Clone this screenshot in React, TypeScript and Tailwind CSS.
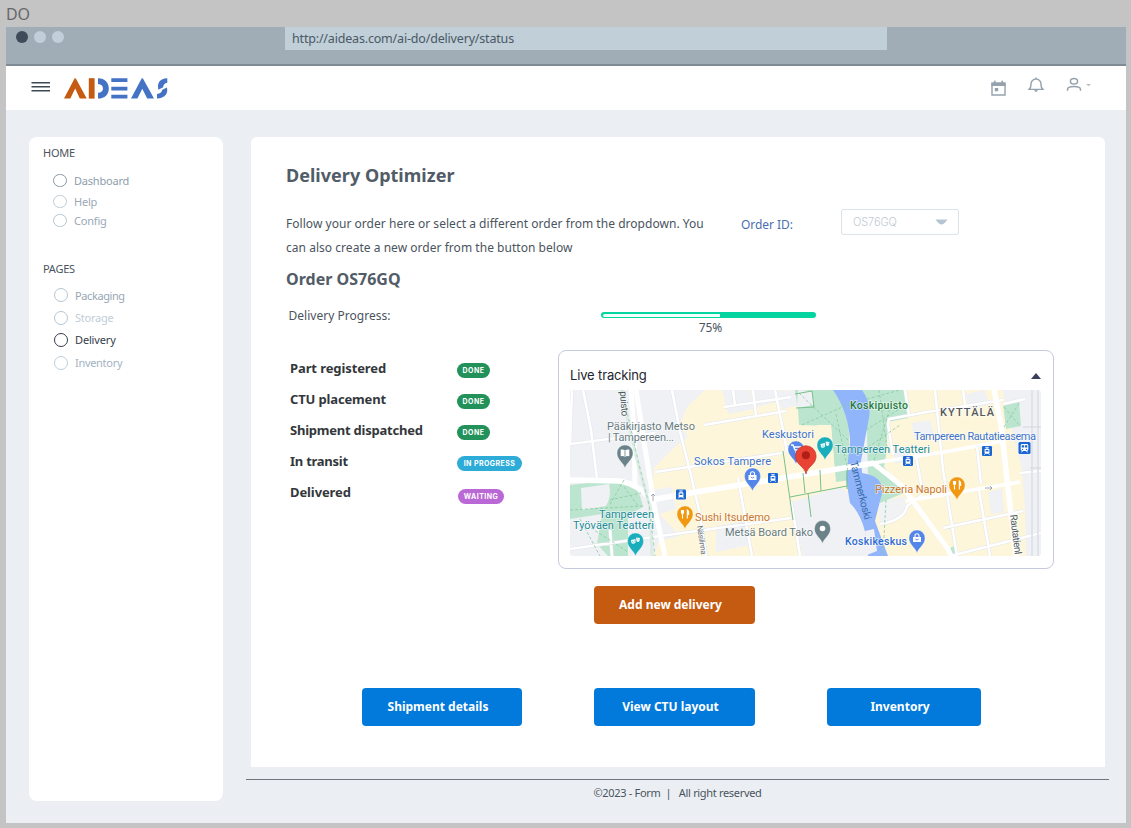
import React from "react";

type Item = { label: string; row: string; text: string; ring: string };

const home: Item[] = [
  { label: "Dashboard", row: "h-[21px] ml-[24px]", text: "text-[#8e9dab] tracking-[-0.2px]", ring: "border-[#8c97a1] w-[14px] h-[13px] mr-[7px]" },
  { label: "Help", row: "h-[20px] ml-[24px]", text: "text-[#9aa8b6] tracking-[-0.2px] pt-[2px]", ring: "border-[#c0ccd6] w-[14px] h-[13px] mr-[7px]" },
  { label: "Config", row: "h-[18px] ml-[24px]", text: "text-[#9aa8b6] tracking-[-0.2px] pt-[2px]", ring: "border-[#b9c6d0] w-[14px] h-[13px] mr-[7px]" },
];

const pages: Item[] = [
  { label: "Packaging", row: "h-[22px] ml-[25px]", text: "text-[#98a6b4] tracking-[-0.4px] pt-px", ring: "border-[#b5c5d0] w-[14px] h-[14px] mr-[7px]" },
  { label: "Storage", row: "h-[23px] ml-[25px]", text: "text-[#bfcdd8] tracking-[-0.25px]", ring: "border-[#b5c5d0] w-[14px] h-[14px] mr-[7px]" },
  { label: "Delivery", row: "h-[22px] ml-[25px]", text: "text-[#343c48] tracking-[-0.15px]", ring: "border-[#343c48] w-[14px] h-[14px] mr-[7px]" },
  { label: "Inventory", row: "h-[23px] ml-[25px]", text: "text-[#a4b3bf] tracking-[-0.3px]", ring: "border-[#c0ced8] w-[14px] h-[14px] mr-[7px]" },
];

function NavItem({ label, row, text, ring }: Item) {
  return (
    <li className={`flex items-center ${row}`}>
      <span className={`shrink-0 rounded-full border ${ring}`} />
      <span className={`text-[11px] leading-[14px] ${text}`}>{label}</span>
    </li>
  );
}

function Logo() {
  return (
    <svg className="ml-[13px] mt-[11px] h-[23px] w-[106px]" viewBox="63 77 106 23">
      <g fill="#c55a11">
        <path d="M64 98.5 74 79.5Q75.2 77.2 76.4 79.5L86.7 98.5H79.8L75.2 88.5 70.3 98.5Z" />
        <path d="M88.8 78.2H94.6V98.6H88.8Z" />
      </g>
      <g fill="#4472c4">
        <path d="M98 78.2C105 78.4 108.8 82.5 108.8 88.4S105 98.4 98 98.6V92.8C101.2 92.5 103 91 103 88.4S101.2 84.2 98 84Z" />
        <path d="M111.3 78.3H127.4V82H111.3ZM111.3 86.7H127.4V90.4H111.3ZM111.3 94.8H127.4V98.5H111.3Z" />
        <path d="M131 98.5 141.1 79.5Q142.3 77.2 143.5 79.5L154 98.5H147.2L142.3 88.8 137.4 98.5Z" />
        <path d="M167.3 78.2V82.7Q163.3 83.2 163.2 87.3L158.4 89.8Q156 79 167.3 78.2ZM162.3 89.8 167 87.6Q168.8 97.8 157 98.6V94Q161.5 93.8 162.3 89.8Z" />
      </g>
    </svg>
  );
}

function Pin({ x, y, color, children }: { x: number; y: number; color: string; children?: React.ReactNode }) {
  return (
    <g transform={`translate(${x} ${y})`}>
      <path d="M0 15C-1.6 9.5-8 7-8 0A8 8 0 0 1 8 0C8 7 1.6 9.5 0 15Z" fill={color} stroke="#fff" strokeOpacity=".55" strokeWidth=".6" />
      {children}
    </g>
  );
}

const bag = (
  <g fill="none" stroke="#fff">
    <path d="M-4-1H4V4H-4Z" fill="#fff" stroke="none" />
    <path d="M-2-1V-2.2A2 2 0 0 1 2-2.2V-1" strokeWidth="1.1" />
    <path d="M-1.7 1Q0 3 1.7 1" stroke="#5485e8" strokeWidth=".9" />
  </g>
);
const cutlery = (
  <g stroke="#fff" fill="none" strokeWidth="1.1">
    <path d="M-3.5-4V-1Q-2.5 .5-1.5-1V-4M-2.5-4V4.5" />
    <path d="M2.3 4.5V-4Q4-3 3.6 .5H2.3" fill="#fff" />
  </g>
);
const masks = (
  <g fill="#fff">
    <path d="M-4.5-1 0-2V1.5Q-2 4-4 2ZM.6-3.6 4.5-3 4 0Q2.5 2 1 0Z" />
    <path d="M-3.3 .4H-2.3M-1.5 0H-.7M-3 2 -1.3 1.7M1.7-2H2.4M3.1-1.8H3.7" stroke="#18aebb" strokeWidth=".6" />
  </g>
);

function Tram({ x, y, size = 10 }: { x: number; y: number; size?: number }) {
  return (
    <g transform={`translate(${x} ${y}) scale(${size / 10})`}>
      <rect x="-5" y="-5" width="10" height="10" rx="1.3" fill="#1b66d2" />
      <path d="M-1.8-3.6H1.8M0-3.6V-2" stroke="#fff" strokeWidth=".8" />
      <rect x="-2.4" y="-2.2" width="4.8" height="5" rx=".8" fill="#fff" />
      <path d="M-1.4-1.1H1.4V.5H-1.4Z" fill="#1b66d2" />
      <path d="M-1.7 2.5-2.6 3.8M1.7 2.5 2.6 3.8" stroke="#fff" strokeWidth=".8" />
    </g>
  );
}

function Train({ x, y }: { x: number; y: number }) {
  return (
    <g transform={`translate(${x} ${y})`}>
      <rect x="-6" y="-6" width="12" height="12" rx="1.5" fill="#1b66d2" />
      <rect x="-3.8" y="-4" width="7.6" height="7" rx="1.4" fill="#fff" />
      <path d="M-2.8-2.8H-.4V-.4H-2.8ZM.4-2.8H2.8V-.4H.4Z" fill="#1b66d2" />
      <circle cx="-2" cy="1.4" r=".7" fill="#1b66d2" />
      <circle cx="2" cy="1.4" r=".7" fill="#1b66d2" />
      <path d="M-2 3-3 4.4M2 3 3 4.4" stroke="#fff" strokeWidth=".9" />
    </g>
  );
}

type LabelProps = { x: number; y: number; w: number; fill: string; children: string; size?: number; weight?: number; rotate?: number };

function Label({ x, y, w, fill, children, size = 11, weight = 400, rotate = 0 }: LabelProps) {
  return (
    <text
      x={x} y={y} textLength={w} fill={fill} fontSize={size} fontWeight={weight}
      stroke="#fff" strokeOpacity=".6" strokeWidth="1.6" strokeLinejoin="round" paintOrder="stroke"
      transform={rotate ? `rotate(${rotate} ${x} ${y})` : undefined}
    >
      {children}
    </text>
  );
}

const sideStreets =
  "M570 444 655 433M704 425 786 411M583 390 591 430 597 479M655 472 782 453M570 549 653 537 791 518M753 390 756 416M672 390 680 432 691 475 699 510 706 556M733 390 735 405M738 478 752 556M775 390 783 430 787 452M791 502 796 530 800 556M724 407 791 397M888 424 889 419 927 412 1003 400M905 390 909 415M935 390 943 470 957 556M963 390 966 412M888 424 893 455M977 446 981 484M915 450 922 489M943 528 1023 511M979 490 990 556M950 556 1041 533M1020 473 1041 471M1003 404 1025 399M880 524Q905 520 907 506L922 495M610 530 612 556M570 444 572 390";

function TrackingMap() {
  return (
    <svg className="block h-[166px] w-[471px] rounded-[3px] font-['Roboto',sans-serif]" viewBox="570 390 471 166">
      <path d="M570 390H1041V556H570Z" fill="#eff1f4" />
      <g fill="#fef6db">
        <path d="M705 390H753L757 407 776 402 781 390H855V556H654L659 541 680 536 651 505 654 468 675 447 688 437 680 424 687 407Z" />
        <path d="M870 390H1002L1022 470 1025 510 1026 556H870Z" />
      </g>
      <g fill="#eff1f4">
        <path d="M722 390H750L754 409 728 414ZM776 391 798 390 799 405 782 409ZM652 490 672 487 676 509 656 515ZM716 526 745 521 750 545 716 552ZM791 502 841 487 870 510 878 556H803ZM912 423 930 420 934 434 914 438ZM966 394 984 390 990 404 969 410ZM893 450 909 446 910 460 895 464ZM988 492 1002 488 1004 512 991 514Z" />
      </g>
      <path d="M878 502 905 496 905 515 880 525Z" fill="#f1f2f4" />

      <g fill="#bce5cf">
        <path d="M570 485 624 479Q638 482 643 507L628 515 628 556H608L597 544 602 514 570 519Z" />
        <path d="M795 390H848L849 435 850 480 836 482 834 460 831 426 799 425 798 410Z" />
        <path d="M862 390H906L908 418 888 422 886 455 884 467 904 493 880 503 868 480 867 430Z" />
        <path d="M1003 404 1019 401 1021 426 1006 429ZM948 549 956 545 958 556H948Z" />
      </g>
      <path d="M581 488 609 484Q612 496 606 506L582 510Z" fill="#eff1f4" />
      <path d="M817 425H831L834 460 820 460Z" fill="#fef6db" />
      <path d="M798 390 812 391 814 405 797 408Z" fill="#eff1f4" />
      <path d="M833 390H862Q873 405 868 423L861 461 862 473Q889 477 880 501L875 521 888 556H868Q867 520 850 503L846 479 850 442Q849 413 833 390Z" fill="#91b5fa" />
      <path d="M865 531 874 529 877 551 867 555Z" fill="#eff1f4" />

      <path d={sideStreets} fill="none" stroke="#e2e5ea" strokeWidth="3.6" />
      <path d={sideStreets} fill="none" stroke="#fff" strokeWidth="2.6" />
      <g fill="none" stroke="#fff" strokeLinejoin="round">
        <path d="M570 480 620 481Q638 484 651 500L690 493 777 479 874 463" strokeWidth="5.5" />
        <path d="M636 390 645 448 655 510 665 556M631 390 634 430 635 486" strokeWidth="5" />
        <path d="M873 463 902 486 948 549 951 556" strokeWidth="5" />
        <path d="M994 390 1001 425 1007 480 1016 556" strokeWidth="5.5" />
        <path d="M906 501 1020 482" strokeWidth="3.8" />
        <path d="M873 463 950 451 1003 441" strokeWidth="3.6" />
      </g>
      <path d="M621 390 637 460 650 507 652 556" fill="none" stroke="#dbece4" strokeWidth="3" />
      <path d="M622 390 638 460 649 505 655 556" fill="none" stroke="#8bcda7" strokeWidth=".8" strokeDasharray="3 3" />
      <g fill="none" stroke="#86ca9e" strokeWidth=".8" strokeDasharray="3 2">
        <path d="M570 510 643 506M580 519 600 556M624 480 609 506M624 487 639 507M610 500 641 493M591 528 628 552M799 393 848 440M802 425 849 404M836 414 848 471M867 399 900 390M866 430 904 406M879 390 887 447M864 450 900 425M874 460 890 408M886 500 883 556M1004 427 1020 402M1004 407 1020 426" />
      </g>
      <path d="M783 451 793 520M790 497 847 486M803 473 805 493M820 470 821 491M808 493 811 517M795 394 812 391 814 407 796 408M847 470V489" fill="none" stroke="#78bf8a" strokeWidth="1" />
      <path d="M1032 390V556M1038 390V556" stroke="#e0e3ea" strokeWidth="2" />
      <path d="M1023 427H1041M1030 468H1041" stroke="#d1d5dc" />
      <path d="M985 488H992M990 486 992 488 990 490M653 494V501M651 496 653 494 655 496" stroke="#8d969f" strokeWidth=".8" fill="none" />

      <Label x={620} y={391.5} w={25} size={10} fill="#4f5a60" rotate={86}>puisto</Label>
      <Label x={607} y={430} w={88} fill="#687b81">Pääkirjasto Metso</Label>
      <Label x={608} y={441} w={66} fill="#687b81">| Tampereen...</Label>
      <Label x={694} y={465} w={77} fill="#3d73c9">Sokos Tampere</Label>
      <Label x={762} y={438} w={52} fill="#3d73c9">Keskustori</Label>
      <Label x={850} y={409} w={58} size={10.5} fill="#237b3b" weight={500}>Koskipuisto</Label>
      <Label x={940} y={415.5} w={54} size={11} fill="#53595e" weight={500}>KYTTÄLÄ</Label>
      <Label x={914} y={440} w={122} fill="#3d73c9">Tampereen Rautatieasema</Label>
      <Label x={835} y={453} w={95} fill="#248b98">Tampereen Teatteri</Label>
      <Label x={875} y={493} w={72} fill="#ca762b">Pizzeria Napoli</Label>
      <Label x={599} y={518} w={55} fill="#248b98">Tampereen</Label>
      <Label x={573} y={529} w={81} fill="#248b98">Työväen Teatteri</Label>
      <Label x={695} y={521} w={75} fill="#ca762b">Sushi Itsudemo</Label>
      <Label x={725} y={536} w={88} fill="#687b81">Metsä Board Tako</Label>
      <Label x={845} y={545} w={62} size={10.5} fill="#2e6bd4" weight={500}>Koskikeskus</Label>
      <Label x={697} y={526} w={29} size={8} fill="#697477" rotate={82}>Näsilinna</Label>
      <Label x={1010} y={515} w={40} size={10} fill="#4f5a60" rotate={83}>Rautatienl</Label>
      <text fontSize="10.5" fill="#386baa" x="850" y="462" textLength="60" transform="rotate(76 850 462)">Tammerkoski</text>

      <Pin x={625} y={453} color="#6c8289">
        <path d="M-4.3-3.4Q-2-3.8 0-2.6 2-3.8 4.3-3.4V3.2Q2 2.6 0 3.8-2 2.6-4.3 3.2Z" fill="#fff" />
        <path d="M0-2.2V3.5" stroke="#6c8289" strokeWidth=".8" />
      </Pin>
      <Pin x={752.5} y={476} color="#5485e8">{bag}</Pin>
      <Pin x={917} y={538} color="#5485e8">{bag}</Pin>
      <Pin x={685} y={514} color="#f09812">{cutlery}</Pin>
      <Pin x={957} y={485} color="#f09812">{cutlery}</Pin>
      <Pin x={635.5} y={541} color="#18aebb">{masks}</Pin>
      <Pin x={825} y={445} color="#18aebb">{masks}</Pin>
      <Pin x={822.5} y={528.5} color="#6c8289"><circle r="2.8" fill="#fff" /></Pin>
      <Pin x={796} y={449} color="#5485e8">
        <path d="M-5-4H-3L-1 1H4L5-2H-2M-1 3.2H0M3 3.2H4" stroke="#fff" strokeWidth="1.3" fill="none" />
      </Pin>
      <path d="M806 474C804.7 466 795.5 465 795.5 456A10.3 10.3 0 0 1 816.1 456C816.1 465 807.3 466 806 474Z" fill="#e94335" stroke="#c5352b" strokeWidth=".7" />
      <circle cx="805.9" cy="455.3" r="4" fill="#b11e16" />

      <Tram x={681} y={494.5} />
      <Tram x={773} y={478} />
      <Tram x={908} y={461} />
      <Tram x={987} y={451} />
      <Train x={1024.5} y={448} />
    </svg>
  );
}

const steps = [
  { label: "Part registered", track: "tracking-[-0.1px]", badge: "DONE", style: "bg-[#23925a] w-[33px]" },
  { label: "CTU placement", track: "tracking-[-0.15px]", badge: "DONE", style: "bg-[#23925a] w-[33px]" },
  { label: "Shipment dispatched", track: "tracking-[-0.23px]", badge: "DONE", style: "bg-[#23925a] w-[33px]" },
  { label: "In transit", track: "tracking-[-0.25px]", badge: "IN PROGRESS", style: "bg-[#2dacd8] w-[65px]" },
  { label: "Delivered", track: "tracking-[-0.1px]", badge: "WAITING", style: "bg-[#ba68d6] w-[46px] mt-[13px] ml-[1px]" },
];

function Action({ children, className }: { children: string; className: string }) {
  return (
    <button className={`flex h-[38px] items-center justify-center rounded-[4px] pb-px text-[12px] font-bold text-white ${className}`}>
      {children}
    </button>
  );
}

export default function App() {
  return (
    <div className="flex h-[828px] w-[1131px] flex-col overflow-hidden bg-[#c4c4c4] pr-[5px] pl-[6px] font-['Noto_Sans',sans-serif] text-[#4a545e]">
      <div className="h-[27px] shrink-0 pt-[3px] text-[16px] leading-[22px] tracking-[-0.3px] text-[#686868]">DO</div>

      <div className="flex h-[39px] shrink-0 items-start border-b-2 border-[#7f8b95] bg-[#a0adb7]">
        <div className="flex w-[279px] gap-[6px] pt-[4px] pl-[9.5px]">
          <span className="size-[12px] rounded-full bg-[#404b59]" />
          <span className="size-[12px] rounded-full bg-[#c0cfd9]" />
          <span className="size-[12px] rounded-full bg-[#c0cfd9]" />
        </div>
        <div className="h-[23px] w-[602px] bg-[#c0cfd8] pl-[7px] text-[12.5px] leading-[24px] tracking-[-0.18px] text-[#4b5865]">
          http://aideas.com/ai-do/delivery/status
        </div>
      </div>

      <header className="flex h-[44px] shrink-0 items-start bg-white">
        <svg className="mt-[15px] ml-[25px] h-[12px] w-[19px]" viewBox="0 0 19 12">
          <path d="M.5 1.7H19M.5 5.7H19M.5 9.7H19" stroke="#3e4957" strokeWidth="1.4" />
        </svg>
        <Logo />
        <div className="mr-[34px] ml-auto flex items-start text-[#95a2ad]">
          <svg className="mt-[14px] mr-[22px] h-[17px] w-[15px]" viewBox="0 0 15 17">
            <path d="M1 3.2H14V15H1Z" fill="none" stroke="currentColor" strokeWidth="1.4" />
            <path d="M.5 2.5H14.5V6H.5ZM3 .8H4.7V3H3ZM10.3 .8H12V3H10.3ZM3.8 8H7.2V11.3H3.8Z" fill="currentColor" />
          </svg>
          <svg className="mt-[11px] mr-[22px] h-[16px] w-[16px]" viewBox="0 0 16 16" fill="none" stroke="currentColor" strokeWidth="1.4">
            <path d="M1 12.4H15Q13 11 13 7A5 5 0 0 0 3 7Q3 11 1 12.4ZM8 .5V2M6.7 13.2Q8 15.4 9.3 13.2" />
          </svg>
          <svg className="mt-[11px] h-[15px] w-[26px]" viewBox="0 0 26 15" fill="none" stroke="currentColor" strokeWidth="1.5">
            <ellipse cx="8" cy="4.2" rx="3.6" ry="2.8" />
            <path d="M1.5 13.8V12.5C1.5 8.5 14.5 8.5 14.5 12.5V13.8" />
            <path d="M20 7H25L22.5 9.2Z" fill="#b5bfc7" stroke="none" />
          </svg>
        </div>
      </header>

      <div className="flex h-[713px] shrink-0 bg-[#ebeff3] pt-[27px] pl-[23px]">
        <aside className="h-[664px] w-[194px] shrink-0 rounded-[8px] bg-white pt-[8px]">
          <h2 className="ml-[14px] text-[11px] leading-[16px] tracking-[-0.2px]">HOME</h2>
          <ul className="mt-[9px] h-[91px]">{home.map((i) => <NavItem key={i.label} {...i} />)}</ul>
          <h2 className="ml-[14px] text-[11px] leading-[16px] tracking-[-0.25px]">PAGES</h2>
          <ul className="mt-[7px]">{pages.map((i) => <NavItem key={i.label} {...i} />)}</ul>
        </aside>

        <div className="ml-[23px] flex w-[863px] flex-col">
          <main className="ml-[5px] h-[630px] w-[854px] rounded-t-[6px] bg-white pt-[26px] pl-[35px]">
            <h1 className="h-[49px] text-[18px] leading-[25px] font-bold tracking-[0.02px] text-[#525c66]">Delivery Optimizer</h1>
            <section className="flex h-[53px] items-start">
              <p className="w-[455px] text-[12px] leading-[24px] tracking-[0.035px] whitespace-nowrap">
                Follow your order here or select a different order from the dropdown. You
                <br />
                can also create a new order from the button below
              </p>
              <span className="mt-[4px] w-[100px] text-[12px] leading-[18px] tracking-[-0.05px] text-[#4c6fb0]">Order ID:</span>
              <div className="-mt-[3px] flex h-[26px] w-[118px] items-center rounded-[2px] border border-[#dce3e9] pr-[10px] pl-[11px] font-['Inter',sans-serif] text-[11px] font-light tracking-[-0.1px] text-[#c3cad1]">
                OS76GQ
                <svg className="mb-px ml-auto h-[6px] w-[13px]" viewBox="0 0 13 6"><path d="M.5 .5H12.5Q9 5.5 6.5 5.5T.5 .5Z" fill="#b5c4d0" /></svg>
              </div>
            </section>
            <h2 className="h-[42px] text-[16px] leading-[28px] font-bold tracking-[0.01px] text-[#525c66]">Order OS76GQ</h2>
            <section className="flex h-[43px] items-start pl-[2.5px]">
              <span className="w-[312.5px] text-[12px] leading-[18px] tracking-[0.02px]">Delivery Progress:</span>
              <div className="flex w-[215px] flex-col pt-[5px]">
                <div className="h-[6px] rounded-full bg-[#04d4a0] p-[1.5px]">
                  <div className="h-[3px] w-[117px] rounded-l-full bg-[#effffb]" />
                </div>
                <span className="pl-[4px] text-center text-[12px] leading-[20px]">75%</span>
              </div>
            </section>
            <section className="flex h-[219px]">
              <ul className="w-[272px] pt-[2px] pl-[4px] text-[#33373b]">
                {steps.map((s) => (
                  <li key={s.label} className="flex h-[31px] items-start">
                    <span className={`mt-[6px] w-[167px] text-[13px] leading-[20px] font-bold ${s.track}`}>{s.label}</span>
                    <span className={`mt-[11px] flex h-[15px] items-center justify-center rounded-full pt-px font-['Inter',sans-serif] text-[7px] font-bold tracking-[0.45px] text-white ${s.style}`}>
                      {s.badge}
                    </span>
                  </li>
                ))}
              </ul>
              <div className="w-[496px] rounded-[8px] border border-[#c5cadd] pl-[11px]">
                <div className="flex h-[39px] items-center pt-[11px] pr-[12px] font-['Inter',sans-serif] text-[13px] tracking-[-0.15px] text-[#22252e]">
                  Live tracking
                  <svg className="ml-auto h-[6px] w-[10px]" viewBox="0 0 10 6"><path d="M0 6 5 0 10 6Z" fill="#39405c" /></svg>
                </div>
                <TrackingMap />
              </div>
            </section>
            <div className="mt-[17px] pl-[308px]">
              <Action className="w-[161px] bg-[#c55a11] pr-[8px]">Add new delivery</Action>
            </div>
            <div className="mt-[64px] flex pl-[76px]">
              <Action className="w-[160px] bg-[#027adb] pr-[8px]">Shipment details</Action>
              <Action className="ml-[72px] w-[161px] bg-[#027adb] pr-[8px]">View CTU layout</Action>
              <Action className="ml-[72px] w-[154px] bg-[#027adb] pr-[8px]">Inventory</Action>
            </div>
          </main>
          <footer className="mt-[12px] border-t border-[#6e7780] pt-[5px] text-center text-[11px] leading-[16px] tracking-[-0.32px]">
            ©2023 - Form&nbsp; |&nbsp;&nbsp; All right reserved
          </footer>
        </div>
      </div>
    </div>
  );
}
